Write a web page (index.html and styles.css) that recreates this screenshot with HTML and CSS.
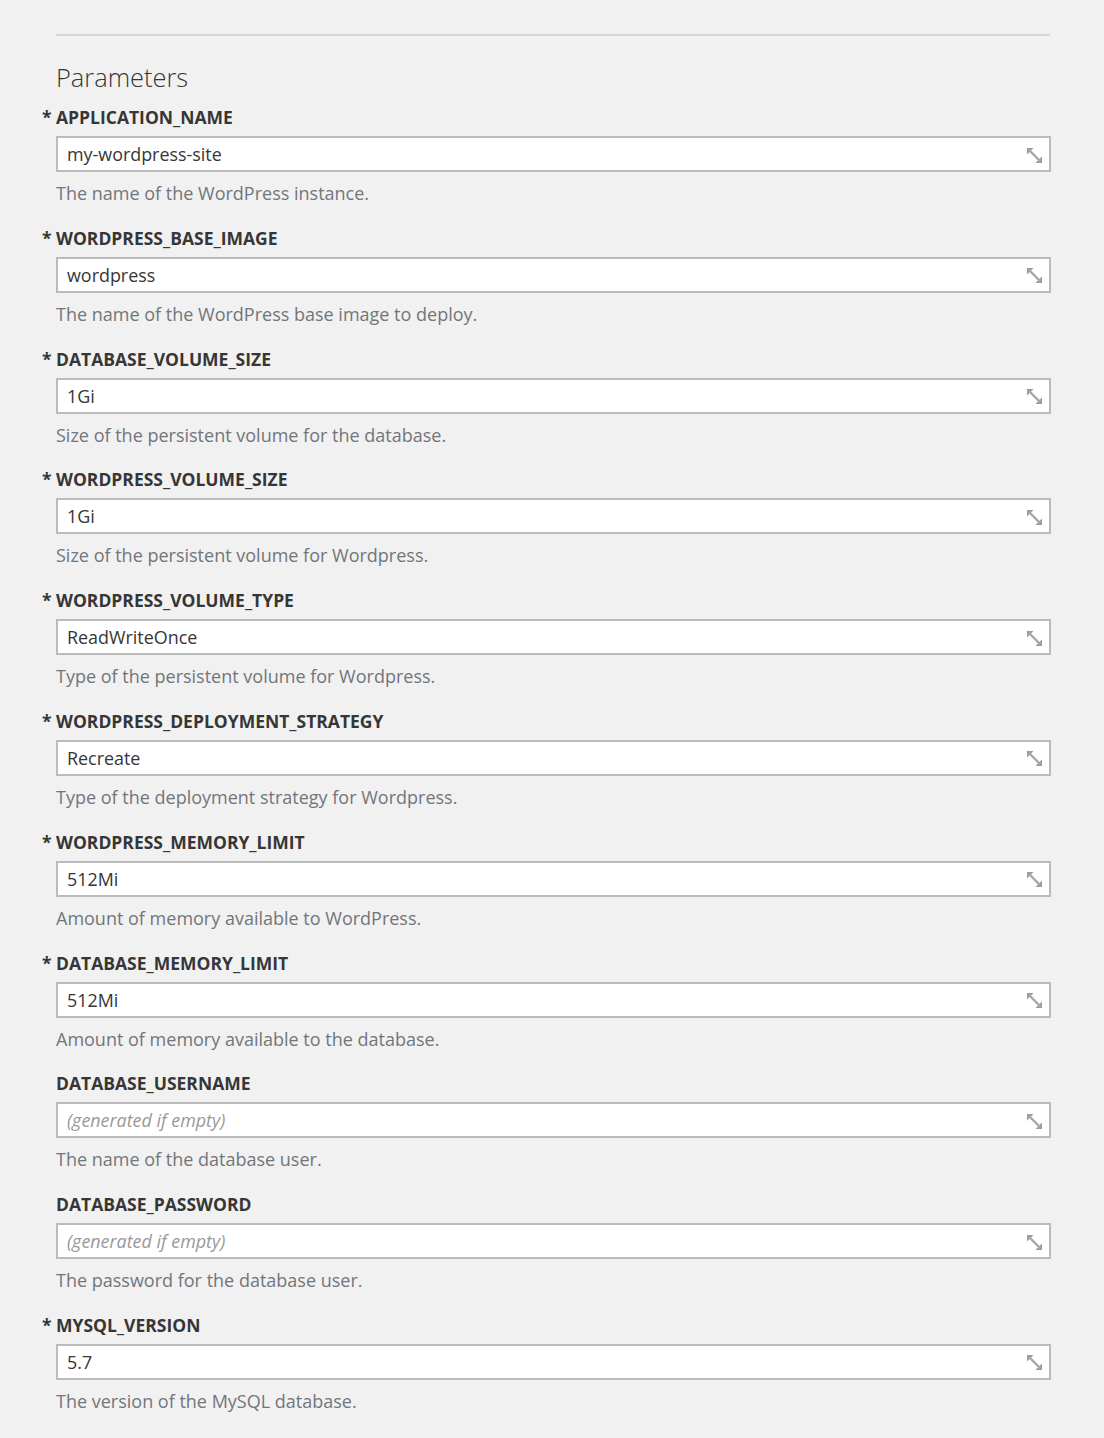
FILE: index.html
```html
<!DOCTYPE html>
<html>
<head>
<meta charset="utf-8">
<link rel="stylesheet" href="styles.css">
</head>
<body>
<div class="page">
  <hr class="rule">
  <h3 class="heading">Parameters</h3>

  <div class="field">
    <label class="label"><span class="req">*</span>APPLICATION_NAME</label>
    <div class="input"><span class="value">my-wordpress-site</span><svg class="resize" viewBox="0 0 16 16"><path class="head" d="M0 0H7L0 7Z M16 16H9L16 9Z"/><path class="shaft" d="M2 2L14 14"/></svg></div>
    <div class="help">The name of the WordPress instance.</div>
  </div>

  <div class="field">
    <label class="label"><span class="req">*</span>WORDPRESS_BASE_IMAGE</label>
    <div class="input"><span class="value">wordpress</span><svg class="resize" viewBox="0 0 16 16"><path class="head" d="M0 0H7L0 7Z M16 16H9L16 9Z"/><path class="shaft" d="M2 2L14 14"/></svg></div>
    <div class="help">The name of the WordPress base image to deploy.</div>
  </div>

  <div class="field">
    <label class="label"><span class="req">*</span>DATABASE_VOLUME_SIZE</label>
    <div class="input"><span class="value">1Gi</span><svg class="resize" viewBox="0 0 16 16"><path class="head" d="M0 0H7L0 7Z M16 16H9L16 9Z"/><path class="shaft" d="M2 2L14 14"/></svg></div>
    <div class="help">Size of the persistent volume for the database.</div>
  </div>

  <div class="field">
    <label class="label"><span class="req">*</span>WORDPRESS_VOLUME_SIZE</label>
    <div class="input"><span class="value">1Gi</span><svg class="resize" viewBox="0 0 16 16"><path class="head" d="M0 0H7L0 7Z M16 16H9L16 9Z"/><path class="shaft" d="M2 2L14 14"/></svg></div>
    <div class="help">Size of the persistent volume for Wordpress.</div>
  </div>

  <div class="field">
    <label class="label"><span class="req">*</span>WORDPRESS_VOLUME_TYPE</label>
    <div class="input"><span class="value">ReadWriteOnce</span><svg class="resize" viewBox="0 0 16 16"><path class="head" d="M0 0H7L0 7Z M16 16H9L16 9Z"/><path class="shaft" d="M2 2L14 14"/></svg></div>
    <div class="help">Type of the persistent volume for Wordpress.</div>
  </div>

  <div class="field">
    <label class="label"><span class="req">*</span>WORDPRESS_DEPLOYMENT_STRATEGY</label>
    <div class="input"><span class="value">Recreate</span><svg class="resize" viewBox="0 0 16 16"><path class="head" d="M0 0H7L0 7Z M16 16H9L16 9Z"/><path class="shaft" d="M2 2L14 14"/></svg></div>
    <div class="help">Type of the deployment strategy for Wordpress.</div>
  </div>

  <div class="field">
    <label class="label"><span class="req">*</span>WORDPRESS_MEMORY_LIMIT</label>
    <div class="input"><span class="value">512Mi</span><svg class="resize" viewBox="0 0 16 16"><path class="head" d="M0 0H7L0 7Z M16 16H9L16 9Z"/><path class="shaft" d="M2 2L14 14"/></svg></div>
    <div class="help">Amount of memory available to WordPress.</div>
  </div>

  <div class="field">
    <label class="label"><span class="req">*</span>DATABASE_MEMORY_LIMIT</label>
    <div class="input"><span class="value">512Mi</span><svg class="resize" viewBox="0 0 16 16"><path class="head" d="M0 0H7L0 7Z M16 16H9L16 9Z"/><path class="shaft" d="M2 2L14 14"/></svg></div>
    <div class="help">Amount of memory available to the database.</div>
  </div>

  <div class="field">
    <label class="label">DATABASE_USERNAME</label>
    <div class="input"><span class="value placeholder">(generated if empty)</span><svg class="resize" viewBox="0 0 16 16"><path class="head" d="M0 0H7L0 7Z M16 16H9L16 9Z"/><path class="shaft" d="M2 2L14 14"/></svg></div>
    <div class="help">The name of the database user.</div>
  </div>

  <div class="field">
    <label class="label">DATABASE_PASSWORD</label>
    <div class="input"><span class="value placeholder">(generated if empty)</span><svg class="resize" viewBox="0 0 16 16"><path class="head" d="M0 0H7L0 7Z M16 16H9L16 9Z"/><path class="shaft" d="M2 2L14 14"/></svg></div>
    <div class="help">The password for the database user.</div>
  </div>

  <div class="field">
    <label class="label"><span class="req">*</span>MYSQL_VERSION</label>
    <div class="input"><span class="value">5.7</span><svg class="resize" viewBox="0 0 16 16"><path class="head" d="M0 0H7L0 7Z M16 16H9L16 9Z"/><path class="shaft" d="M2 2L14 14"/></svg></div>
    <div class="help">The version of the MySQL database.</div>
  </div>
</div>
</body>
</html>
```

FILE: styles.css
```css
* { box-sizing: border-box; }
html, body {
  margin: 0;
  padding: 0;
  background: #f1f1f1;
}
body {
  font-family: "Open Sans", "Liberation Sans", sans-serif;
  color: #363636;
}
.page {
  width: 995px;
  margin-left: 56px;
  padding-top: 34px;
}
.rule {
  margin: 0;
  border: 0;
  border-top: 2px solid #d7d7d7;
  width: 994px;
}
.heading {
  margin: 25px 0 12px;
  font-size: 25.4px;
  font-weight: 300;
  color: #363636;
  line-height: 32px;
}
.field {
  display: flex;
  flex-direction: column;
  margin-bottom: 20.8px;
}
.label {
  display: block;
  font-size: 17.5px;
  font-weight: 700;
  line-height: 24px;
  color: #363636;
}
.req {
  display: inline-block;
  width: 14px;
  margin-left: -14px;
}
.input {
  margin-top: 7px;
  height: 36px;
  border: 2px solid #bbbbbb;
  background: #fff;
  display: flex;
  align-items: center;
  padding: 0 7px 0 9px;
}
.value {
  flex: 1;
  font-size: 17.9px;
  color: #363636;
}
.placeholder {
  font-style: italic;
  color: #999;
}
.resize {
  width: 15px;
  height: 15px;
  margin-top: 2px;
}
.resize .head {
  fill: #9c9c9c;
}
.resize .shaft {
  stroke: #a8a8a8;
  stroke-width: 2.4;
  fill: none;
}
.help {
  margin-top: 9px;
  font-size: 18px;
  line-height: 24px;
  color: #72767b;
}
```
